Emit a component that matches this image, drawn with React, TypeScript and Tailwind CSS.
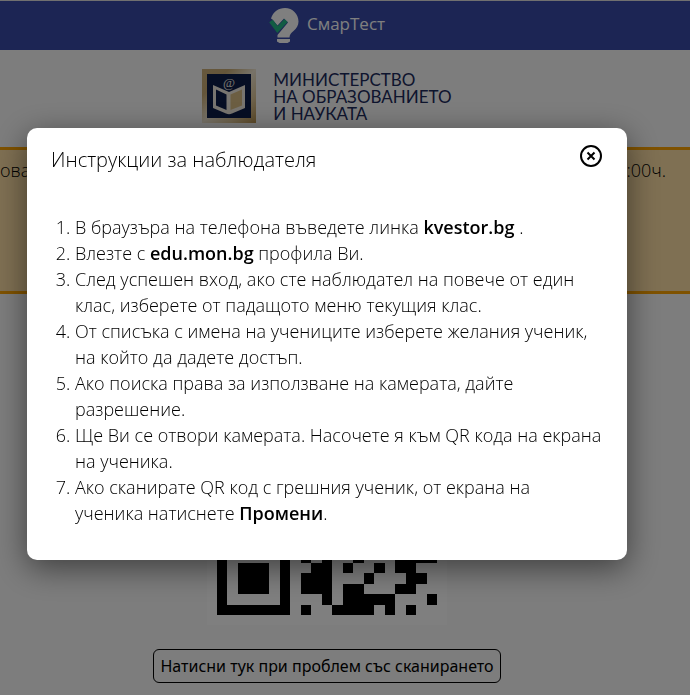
import React, { useState } from 'react';

// 21x21 modules, x = dark
const QR_ROWS = [
  'xxxxxxx.x..x..xxxxxxx',
  'x.....x..xx.x.x.....x',
  'x.xxx.x.x...x.x.xxx.x',
  'x.xxx.x..x.x..x.xxx.x',
  'x.xxx.x.xx..x.x.xxx.x',
  'x.....x...xx..x.....x',
  'xxxxxxx.x.x.x.xxxxxxx',
  '........xx...........',
  'x.x.xxxx..x.xx..x.xx.',
  '..xx.x..xx.x..xx..x.x',
  'x..xx.x.x.xx.x..xx..x',
  '.xx...x..x..xx.x..xx.',
  'xx.x.xx.x.xx..x.xx...',
  '........x..x.x..x.x.x',
  'xxxxxxx..xx..x.x..x..',
  'x.....x.x.x..x...xxxx',
  'x.xxx.x..xx.x..x.xx..',
  'x.xxx.x.xxx...x...xx.',
  'x.xxx.x.xxx.xx...xx..',
  'x.....x...x.xxxxx...x',
  'xxxxxxx.x..xxxx.x.x..',
];

const QrCode = () => (
  <svg viewBox="0 0 21 21" className="h-[220px] w-[220px]" shapeRendering="crispEdges" role="img" aria-label="QR код">
    {QR_ROWS.map((row, y) =>
      row.split('').map((cell, x) =>
        cell === 'x' ? <rect key={`${x}-${y}`} x={x} y={y} width="1" height="1" /> : null
      )
    )}
  </svg>
);

const BulbLogo = () => (
  <svg viewBox="0 0 30 36" className="h-9 w-[30px]" aria-hidden="true">
    <path
      fill="#fff"
      d="M2 10.500C4 4 9.500 0 16 0c7.500 0 13.500 6 13.500 13.500 0 4-2 7-5 9.500-2.500 2-4 4-4 6.500H8.500V27l10.500-12.500-4-4-6.500 7-5-6z"
    />
    <path fill="none" stroke="#23b886" strokeWidth="4.500" d="M2 13l6.500 8.500 8.500-9" />
    <path fill="#fff" d="M8 31h13v2.500L18.500 35h-8L8 33.500z" />
  </svg>
);

const MinistryLogo = () => (
  <svg viewBox="0 0 54 54" className="h-[54px] w-[54px]" aria-hidden="true">
    <defs>
      <linearGradient id="gold" x1="0" y1="0" x2="1" y2="1">
        <stop offset="0" stopColor="#cdb07a" />
        <stop offset="0.25" stopColor="#c9ab74" />
        <stop offset="0.5" stopColor="#efe6d2" />
        <stop offset="0.75" stopColor="#dcc598" />
        <stop offset="1" stopColor="#b8924e" />
      </linearGradient>
    </defs>
    <rect width="54" height="54" fill="url(#gold)" />
    <rect x="5" y="5" width="44" height="44" fill="#0c1c48" />
    <path fill="#f1ebe0" d="M11 16l16 7 16-7v23l-13 5.500q-3 1.500-6 0L11 39z" />
    <path fill="#0c1c48" d="M14 20.500l10.500 5V41L14 36.500z" />
    <path fill="#d9bd85" d="M28.500 25.500l11.500-5v16L28.500 41z" />
    <text x="27" y="18" textAnchor="middle" fontSize="13" fill="#f1ebe0" fontFamily="Liberation Serif, serif">
      @
    </text>
  </svg>
);

const CloseIcon = () => (
  <svg viewBox="0 0 24 24" className="h-6 w-6" fill="none" stroke="currentColor" aria-hidden="true">
    <circle cx="12" cy="12" r="10" strokeWidth="2" />
    <path d="M8.500 8.500l7 7M15.500 8.500l-7 7" strokeWidth="2" />
  </svg>
);

const STEPS: React.ReactNode[] = [
  <>В браузъра на телефона въведете линка <b className="font-semibold">kvestor.bg</b> .</>,
  <>Влезте с <b className="font-semibold">edu.mon.bg</b> профила Ви.</>,
  <>След успешен вход, ако сте наблюдател на повече от един клас, изберете от падащото меню текущия клас.</>,
  <>От списъка с имена на учениците изберете желания ученик, на който да дадете достъп.</>,
  <>Ако поиска права за използване на камерата, дайте<br />разрешение.</>,
  <>Ще Ви се отвори камерата. Насочете я към QR кода на екрана на ученика.</>,
  <>Ако сканирате QR код с грешния ученик, от екрана на<br />ученика натиснете <b className="font-semibold">Промени</b>.</>,
];

const App = () => {
  const [open, setOpen] = useState(true);

  return (
    <div className="min-h-screen overflow-hidden bg-[#fafafa] font-['Open_Sans',sans-serif] text-black">
      <header className="flex h-[50px] items-center justify-center gap-2 border-t border-[#e0e0e0] bg-[#384ba8] pr-9 text-white">
        <BulbLogo />
        <span className="pb-1 text-[17px]">СмарТест</span>
      </header>

      <div className="flex items-center justify-center gap-[17px] pt-[19px] pr-9">
        <MinistryLogo />
        <p className="font-['Lato',sans-serif] text-[17px] leading-[17px] text-[#1c2a5c]">
          МИНИСТЕРСТВО
          <br />
          НА ОБРАЗОВАНИЕТО
          <br />
          И НАУКАТА
        </p>
      </div>

      <section className="mt-6 flex h-[147px] justify-between border-y-3 border-[#ffa500] bg-[#ffe0a6] pt-[6px] pr-6 text-lg font-light">
        <span>ова</span>
        <span>12:00ч.</span>
      </section>

      <main className="flex flex-col items-center pr-9">
        <div className="mt-[91px] bg-white p-[10px]">
          <QrCode />
        </div>
        <button
          type="button"
          onClick={() => setOpen(true)}
          className="mt-6 h-[34px] rounded-md border border-black px-[6px] font-['Noto_Sans',sans-serif] text-base"
        >
          Натисни тук при проблем със сканирането
        </button>
      </main>

      {open && (
        <div className="fixed inset-0 flex items-start justify-center bg-black/50 pt-32 pr-9">
          <div
            role="dialog"
            aria-modal="true"
            aria-labelledby="dialog-title"
            className="w-full max-w-[600px] rounded-[10px] bg-white pb-[34px] shadow-[0_8px_32px_rgba(0,0,0,0.5)]"
          >
            <div className="flex items-start justify-between px-6 pt-4">
              <h2 id="dialog-title" className="text-xl leading-8 font-light">
                Инструкции за наблюдателя
              </h2>
              <button type="button" aria-label="Затвори" onClick={() => setOpen(false)}>
                <CloseIcon />
              </button>
            </div>
            <ol className="mt-[38px] list-decimal pr-5 pl-12 text-lg leading-[26px] font-light">
              {STEPS.map((step, i) => (
                <li key={i}>{step}</li>
              ))}
            </ol>
          </div>
        </div>
      )}
    </div>
  );
};

export default App;
